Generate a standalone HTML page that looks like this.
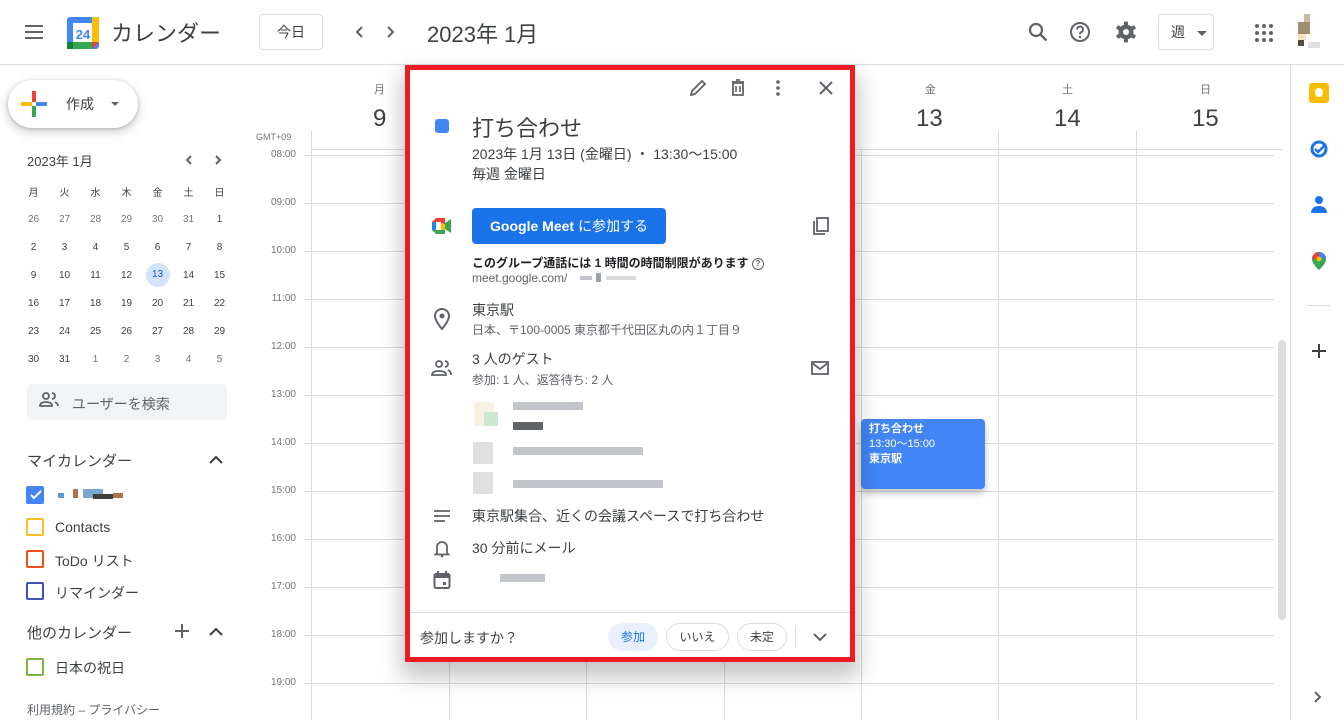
<!DOCTYPE html>
<html style="width:1344px;height:720px;overflow:hidden"><head><meta charset="utf-8"><style>
*{box-sizing:border-box;margin:0;padding:0}
body{width:1344px;height:720px;overflow:hidden;background:#fff;font-family:"Liberation Sans","Noto Sans CJK JP",sans-serif;color:#3c4043;position:relative}
.a{position:absolute}
.t{white-space:nowrap}
.hl{position:absolute;left:304px;width:970px;height:1px;background:#dadce0}
.vl{position:absolute;top:130px;width:1px;height:590px;background:#dadce0}
.tl{position:absolute;left:256px;width:40px;text-align:right;font-size:10px;color:#70757a}
.mc td{width:31px;height:28px;text-align:center;font-size:10px;color:#3c4043;padding:0}
.cb{position:absolute;left:26px;width:18px;height:18px;border:2px solid;border-radius:2px}
.cl{position:absolute;left:55px;font-size:14px;color:#3c4043}
.px{position:absolute;background:#9aa0a6}
</style></head><body>
<div class="a" style="left:0;top:64px;width:1344px;height:1px;background:#dadce0"></div>
<svg class="a" style="left:24px;top:22px" width="20" height="20" viewBox="0 0 20 20"><path d="M1 4h18M1 10h18M1 16h18" stroke="#5f6368" stroke-width="2"/></svg>
<svg class="a" style="left:66px;top:16px" width="34" height="34" viewBox="0 0 34 34"><rect x="1" y="1" width="32" height="32" rx="3" fill="#4285f4"/><rect x="7" y="7" width="20" height="20" fill="#fff"/><rect x="1" y="26" width="26" height="7" fill="#34a853"/><rect x="26" y="1" width="7" height="26" fill="#fbbc04"/><path d="M26 26h7l-7 7z" fill="#ea4335"/><rect x="1" y="26" width="6" height="7" fill="#188038"/><text x="17" y="23" font-size="13" font-family="Liberation Sans" fill="#4285f4" text-anchor="middle" font-weight="bold">24</text></svg>
<div class="a t" style="left:111px;top:16px;font-size:22px;color:#3c4043">カレンダー</div>
<div class="a" style="left:259px;top:14px;width:64px;height:36px;border:1px solid #dadce0;border-radius:4px;font-size:14px;text-align:center;line-height:34px">今日</div>
<svg class="a" style="left:352px;top:24px" width="50" height="16" viewBox="0 0 50 16"><path d="M10 3l-5 5 5 5M36 3l5 5-5 5" stroke="#5f6368" stroke-width="2" fill="none"/></svg>
<div class="a t" style="left:427px;top:17px;font-size:22px;color:#3c4043">2023年 1月</div>
<svg class="a" style="left:1026px;top:20px" width="24" height="24" viewBox="0 0 24 24"><circle cx="10" cy="10" r="6" stroke="#5f6368" stroke-width="2.2" fill="none"/><path d="M14.5 14.5l6 6" stroke="#5f6368" stroke-width="2.4"/></svg>
<svg class="a" style="left:1068px;top:20px" width="24" height="24" viewBox="0 0 24 24"><circle cx="12" cy="12" r="9" stroke="#5f6368" stroke-width="2" fill="none"/><path d="M9 9.5a3 3 0 1 1 4 2.8c-.8.4-1 1-1 2" stroke="#5f6368" stroke-width="2" fill="none"/><circle cx="12" cy="17" r="1.2" fill="#5f6368"/></svg>
<svg class="a" style="left:1114px;top:20px" width="24" height="24" viewBox="0 0 24 24"><g fill="#5f6368"><rect x="10" y="1.5" width="4" height="21" rx="1"/><rect x="10" y="1.5" width="4" height="21" rx="1" transform="rotate(60 12 12)"/><rect x="10" y="1.5" width="4" height="21" rx="1" transform="rotate(120 12 12)"/><circle cx="12" cy="12" r="7.5"/></g><circle cx="12" cy="12" r="3" fill="#fff"/></svg>
<div class="a" style="left:1158px;top:14px;width:56px;height:36px;border:1px solid #dadce0;border-radius:4px;font-size:14px;line-height:34px;padding-left:12px">週<span style="position:absolute;left:38px;top:16px;border:5px solid transparent;border-top-color:#5f6368;border-bottom:0"></span></div>
<svg class="a" style="left:1255px;top:24px" width="18" height="18" viewBox="0 0 18 18" fill="#5f6368"><circle cx="2" cy="2" r="2"/><circle cx="9" cy="2" r="2"/><circle cx="16" cy="2" r="2"/><circle cx="2" cy="9" r="2"/><circle cx="9" cy="9" r="2"/><circle cx="16" cy="9" r="2"/><circle cx="2" cy="16" r="2"/><circle cx="9" cy="16" r="2"/><circle cx="16" cy="16" r="2"/></svg>
<div class="a" style="left:1304px;top:14px;width:6px;height:8px;background:#c9bba8"></div><div class="a" style="left:1298px;top:22px;width:12px;height:12px;background:#a08c70"></div><div class="a" style="left:1298px;top:34px;width:8px;height:6px;background:#f2e0c0"></div><div class="a" style="left:1298px;top:40px;width:6px;height:6px;background:#5a4a40"></div><div class="a" style="left:1308px;top:42px;width:12px;height:6px;background:#e0e0e0"></div>

<div class="a" style="left:8px;top:80px;width:130px;height:48px;border-radius:24px;box-shadow:0 1px 3px rgba(60,64,67,.3),0 4px 8px 3px rgba(60,64,67,.15);background:#fff"></div>
<svg class="a" style="left:21px;top:91px" width="26" height="26" viewBox="0 0 26 26"><rect x="11" y="0" width="4" height="11" fill="#ea4335"/><rect x="15" y="11" width="11" height="4" fill="#4285f4"/><rect x="11" y="15" width="4" height="11" fill="#34a853"/><rect x="0" y="11" width="11" height="4" fill="#fbbc04"/></svg>
<div class="a t" style="left:66px;top:94px;font-size:14px">作成</div>
<div class="a" style="left:111px;top:102px;border:4px solid transparent;border-top-color:#5f6368;border-bottom:0"></div>
<div class="a t" style="left:27px;top:151px;font-size:13px;color:#3c4043">2023年 1月</div>
<svg class="a" style="left:182px;top:153px" width="44" height="14" viewBox="0 0 44 14"><path d="M9 3l-4 4 4 4M34 3l4 4-4 4" stroke="#5f6368" stroke-width="2" fill="none"/></svg>
<table class="a mc" style="left:18px;top:177px;border-collapse:collapse">
<tr><td>月</td><td>火</td><td>水</td><td>木</td><td>金</td><td>土</td><td>日</td></tr>
<tr><td style="color:#70757a">26</td><td style="color:#70757a">27</td><td style="color:#70757a">28</td><td style="color:#70757a">29</td><td style="color:#70757a">30</td><td style="color:#70757a">31</td><td>1</td></tr>
<tr><td>2</td><td>3</td><td>4</td><td>5</td><td>6</td><td>7</td><td>8</td></tr>
<tr><td>9</td><td>10</td><td>11</td><td>12</td><td><span style="display:inline-block;width:24px;height:24px;border-radius:12px;background:#d2e3fc;color:#185abc;line-height:24px">13</span></td><td>14</td><td>15</td></tr>
<tr><td>16</td><td>17</td><td>18</td><td>19</td><td>20</td><td>21</td><td>22</td></tr>
<tr><td>23</td><td>24</td><td>25</td><td>26</td><td>27</td><td>28</td><td>29</td></tr>
<tr><td>30</td><td>31</td><td style="color:#70757a">1</td><td style="color:#70757a">2</td><td style="color:#70757a">3</td><td style="color:#70757a">4</td><td style="color:#70757a">5</td></tr>
</table>
<div class="a" style="left:27px;top:384px;width:200px;height:36px;background:#f1f3f4;border-radius:4px"></div>
<svg class="a" style="left:39px;top:392px" width="20" height="16" viewBox="0 0 20 16"><circle cx="7" cy="4" r="3" stroke="#5f6368" stroke-width="1.8" fill="none"/><path d="M1 14c0-3 3-4 6-4s6 1 6 4zM13 1a3 3 0 0 1 0 6M16 10c2 1 3 2 3 4" stroke="#5f6368" stroke-width="1.8" fill="none"/></svg>
<div class="a t" style="left:72px;top:394px;font-size:14px;color:#5f6368">ユーザーを検索</div>
<div class="a t" style="left:27px;top:450px;font-size:15px;color:#3c4043">マイカレンダー</div>
<svg class="a" style="left:208px;top:454px" width="16" height="12" viewBox="0 0 16 12"><path d="M2 9l6-6 6 6" stroke="#3c4043" stroke-width="2" fill="none"/></svg>
<div class="cb" style="top:486px;background:#4285f4;border-color:#4285f4"></div>
<svg class="a" style="left:29px;top:489px" width="14" height="12" viewBox="0 0 14 12"><path d="M2 6l3 3 7-7" stroke="#fff" stroke-width="2" fill="none"/></svg>
<div class="a" style="left:58px;top:493px;width:6px;height:5px;background:#5b9bd5"></div><div class="a" style="left:73px;top:489px;width:5px;height:9px;background:#b0704a"></div><div class="a" style="left:83px;top:489px;width:20px;height:9px;background:#7aa6cf"></div><div class="a" style="left:93px;top:494px;width:20px;height:5px;background:#3c4043"></div><div class="a" style="left:113px;top:493px;width:10px;height:5px;background:#b0704a"></div>
<div class="cb" style="top:518px;border-color:#f6bf26"></div><div class="cl t" style="top:519px">Contacts</div>
<div class="cb" style="top:550px;border-color:#f4511e"></div><div class="cl t" style="top:551px">ToDo リスト</div>
<div class="cb" style="top:582px;border-color:#3f51b5"></div><div class="cl t" style="top:583px">リマインダー</div>
<div class="a t" style="left:27px;top:622px;font-size:15px">他のカレンダー</div>
<svg class="a" style="left:174px;top:623px" width="16" height="16" viewBox="0 0 16 16"><path d="M8 1v14M1 8h14" stroke="#5f6368" stroke-width="2"/></svg>
<svg class="a" style="left:208px;top:626px" width="16" height="12" viewBox="0 0 16 12"><path d="M2 9l6-6 6 6" stroke="#3c4043" stroke-width="2" fill="none"/></svg>
<div class="cb" style="top:658px;border-color:#7cb342"></div><div class="cl t" style="top:658px">日本の祝日</div>
<div class="a t" style="left:27px;top:701px;font-size:12px;color:#5f6368">利用規約 – プライバシー</div>

<div class="a t" style="left:256px;top:132px;font-size:9px;color:#70757a">GMT+09</div>
<div class="vl" style="left:311px;top:130px"></div>
<div class="vl" style="left:449px;top:150px;height:570px"></div><div class="vl" style="left:586px;top:150px;height:570px"></div><div class="vl" style="left:724px;top:150px;height:570px"></div><div class="vl" style="left:861px;top:150px;height:570px"></div><div class="vl" style="left:998px"></div><div class="vl" style="left:1136px"></div>
<div class="hl" style="top:149px;left:312px"></div>
<div class="hl" style="top:155px"></div><div class="hl" style="top:203px"></div><div class="hl" style="top:251px"></div><div class="hl" style="top:299px"></div><div class="hl" style="top:347px"></div><div class="hl" style="top:395px"></div><div class="hl" style="top:443px"></div><div class="hl" style="top:491px"></div><div class="hl" style="top:539px"></div><div class="hl" style="top:587px"></div><div class="hl" style="top:635px"></div><div class="hl" style="top:683px"></div>
<div class="tl" style="top:149px">08:00</div><div class="tl" style="top:197px">09:00</div><div class="tl" style="top:245px">10:00</div><div class="tl" style="top:293px">11:00</div><div class="tl" style="top:341px">12:00</div><div class="tl" style="top:389px">13:00</div><div class="tl" style="top:437px">14:00</div><div class="tl" style="top:485px">15:00</div><div class="tl" style="top:533px">16:00</div><div class="tl" style="top:581px">17:00</div><div class="tl" style="top:629px">18:00</div><div class="tl" style="top:677px">19:00</div>
<div class="a t" style="left:374px;top:81px;font-size:11px;color:#70757a">月</div>
<div class="a t" style="left:373px;top:105px;font-size:24px;color:#3c4043">9</div>
<div class="a t" style="left:925px;top:81px;font-size:11px;color:#70757a">金</div>
<div class="a t" style="left:916px;top:105px;font-size:24px">13</div>
<div class="a t" style="left:1062px;top:81px;font-size:11px;color:#70757a">土</div>
<div class="a t" style="left:1054px;top:105px;font-size:24px">14</div>
<div class="a t" style="left:1200px;top:81px;font-size:11px;color:#70757a">日</div>
<div class="a t" style="left:1192px;top:105px;font-size:24px">15</div>
<div class="a" style="left:861px;top:419px;width:124px;height:70px;background:#4285f4;border-radius:4px;box-shadow:0 4px 8px rgba(0,0,0,.25);color:#fff;font-size:11px;font-weight:bold;padding:3px 8px;line-height:15px">打ち合わせ<br><span style="font-weight:normal">13:30〜15:00</span><br>東京駅</div>
<div class="a" style="left:1278px;top:340px;width:8px;height:280px;background:#dadce0;border-radius:4px"></div>
<div class="a" style="left:1290px;top:65px;width:1px;height:655px;background:#dadce0"></div>
<div class="a" style="left:1309px;top:83px;width:20px;height:20px;background:#fbbc04;border-radius:3px"></div><div class="a" style="left:1315px;top:88px;width:8px;height:9px;background:#fff;border-radius:4px"></div>
<svg class="a" style="left:1309px;top:139px" width="20" height="20" viewBox="0 0 20 20"><circle cx="10" cy="10" r="7" stroke="#1a73e8" stroke-width="3" fill="none"/><path d="M6 10l3 3 7-7" stroke="#1a73e8" stroke-width="2.5" fill="none"/></svg>
<svg class="a" style="left:1310px;top:194px" width="18" height="20" viewBox="0 0 18 20"><circle cx="9" cy="6" r="4" fill="#1a73e8"/><path d="M1 19c0-5 4-7 8-7s8 2 8 7z" fill="#1a73e8"/></svg>
<svg class="a" style="left:1311px;top:251px" width="16" height="20" viewBox="0 0 16 20"><path d="M8 1a7 7 0 0 1 7 7c0 5-7 11-7 11S1 13 1 8a7 7 0 0 1 7-7z" fill="#34a853"/><path d="M8 1a7 7 0 0 1 7 7H8z" fill="#4285f4"/><path d="M1 8a7 7 0 0 1 7-7v7z" fill="#ea4335"/><circle cx="8" cy="8" r="2.5" fill="#fbbc04"/></svg>
<div class="a" style="left:1307px;top:305px;width:24px;height:1px;background:#dadce0"></div>
<svg class="a" style="left:1311px;top:343px" width="16" height="16" viewBox="0 0 16 16"><path d="M8 1v14M1 8h14" stroke="#3c4043" stroke-width="2"/></svg>
<svg class="a" style="left:1313px;top:690px" width="10" height="14" viewBox="0 0 10 14"><path d="M2 2l5 5-5 5" stroke="#5f6368" stroke-width="2" fill="none"/></svg>

<div class="a" style="left:405px;top:65px;width:450px;height:597px;border:5px solid #ed1c24;background:#fff;box-shadow:0 12px 20px 4px rgba(0,0,0,.22)"></div>
<svg class="a" style="left:688px;top:78px" width="20" height="20" viewBox="0 0 20 20"><path d="M3 17l1-4L14 3l3 3L7 16z" stroke="#5f6368" stroke-width="1.8" fill="none"/></svg>
<svg class="a" style="left:728px;top:78px" width="20" height="20" viewBox="0 0 20 20"><path d="M4 4h12M8 2h4M5 5h10v12H5z" stroke="#5f6368" stroke-width="1.8" fill="none"/><path d="M8 8v6M12 8v6" stroke="#5f6368" stroke-width="1.6"/></svg>
<svg class="a" style="left:774px;top:79px" width="8" height="18" viewBox="0 0 8 18" fill="#5f6368"><circle cx="4" cy="3" r="1.8"/><circle cx="4" cy="9" r="1.8"/><circle cx="4" cy="15" r="1.8"/></svg>
<svg class="a" style="left:817px;top:79px" width="18" height="18" viewBox="0 0 18 18"><path d="M3 3l12 12M15 3L3 15" stroke="#5f6368" stroke-width="2"/></svg>
<div class="a" style="left:435px;top:119px;width:14px;height:14px;background:#4285f4;border-radius:3px"></div>
<div class="a t" style="left:472px;top:111px;font-size:22px;color:#3c4043">打ち合わせ</div>
<div class="a t" style="left:472px;top:144px;font-size:14px">2023年 1月 13日 (金曜日) ・ 13:30〜15:00</div>
<div class="a t" style="left:472px;top:164px;font-size:14px">毎週 金曜日</div>
<svg class="a" style="left:432px;top:218px" width="20" height="16" viewBox="0 0 20 16"><path d="M0 4l4-4h9v6z" fill="#ea4335"/><rect x="0" y="4" width="4" height="8" fill="#1e88e5"/><path d="M0 12h13v4H4z" fill="#34a853"/><rect x="9" y="6" width="4" height="6" fill="#fbbc04"/><path d="M13 5l6-4v14l-6-4z" fill="#34a853"/><rect x="4" y="4" width="5" height="8" fill="#fff"/></svg>
<div class="a" style="left:472px;top:208px;width:194px;height:36px;background:#1a73e8;border-radius:4px;color:#fff;font-size:14px;font-weight:bold;text-align:center;line-height:36px">Google Meet <span style="font-weight:normal">に参加する</span></div>
<svg class="a" style="left:810px;top:216px" width="20" height="20" viewBox="0 0 20 20"><path d="M4 5v13h11" stroke="#5f6368" stroke-width="1.8" fill="none"/><rect x="7" y="2" width="11" height="13" stroke="#5f6368" stroke-width="1.8" fill="none"/></svg>
<div class="a t" style="left:472px;top:254px;font-size:12px;font-weight:bold;color:#202124">このグループ通話には 1 時間の時間制限があります <span style="display:inline-block;width:12px;height:12px;border:1.5px solid #5f6368;border-radius:6px;font-size:8px;line-height:9px;text-align:center;color:#5f6368;vertical-align:1px">?</span></div>
<div class="a t" style="left:472px;top:271px;font-size:12px;color:#5f6368">meet.google.com/</div>
<div class="px" style="left:580px;top:276px;width:12px;height:4px;opacity:.6"></div><div class="px" style="left:596px;top:273px;width:5px;height:9px"></div><div class="px" style="left:606px;top:276px;width:30px;height:4px;opacity:.4"></div>
<svg class="a" style="left:432px;top:307px" width="20" height="24" viewBox="0 0 20 24"><path d="M10 2a7 7 0 0 1 7 7c0 5-7 13-7 13S3 14 3 9a7 7 0 0 1 7-7z" stroke="#5f6368" stroke-width="2" fill="none"/><circle cx="10" cy="9" r="2.5" fill="#5f6368"/></svg>
<div class="a t" style="left:472px;top:300px;font-size:14px">東京駅</div>
<div class="a t" style="left:472px;top:321px;font-size:12px;color:#5f6368">日本、〒100-0005 東京都千代田区丸の内１丁目９</div>
<svg class="a" style="left:431px;top:360px" width="22" height="16" viewBox="0 0 22 16"><circle cx="8" cy="4" r="3" stroke="#5f6368" stroke-width="1.8" fill="none"/><path d="M1 15c0-3 3-4 7-4s7 1 7 4zM14 1a3 3 0 0 1 0 6M17 10c2 1 3 2 3 5" stroke="#5f6368" stroke-width="1.8" fill="none"/></svg>
<div class="a t" style="left:472px;top:349px;font-size:14px">3 人のゲスト</div>
<div class="a t" style="left:472px;top:371px;font-size:12px;color:#5f6368">参加: 1 人、返答待ち: 2 人</div>
<svg class="a" style="left:810px;top:360px" width="20" height="16" viewBox="0 0 20 16"><rect x="2" y="2" width="16" height="12" stroke="#5f6368" stroke-width="1.8" fill="none"/><path d="M2 3l8 6 8-6" stroke="#5f6368" stroke-width="1.8" fill="none"/></svg>
<div class="a" style="left:474px;top:402px;width:20px;height:24px;background:#f5ecd8;opacity:.7"></div><div class="a" style="left:484px;top:412px;width:14px;height:14px;background:#cce8d0"></div>
<div class="px" style="left:513px;top:402px;width:70px;height:8px;opacity:.6"></div><div class="px" style="left:513px;top:422px;width:30px;height:8px;background:#5f6368"></div>
<div class="a" style="left:473px;top:442px;width:20px;height:22px;background:#e0e0e0"></div><div class="px" style="left:513px;top:447px;width:130px;height:8px;opacity:.6"></div>
<div class="a" style="left:473px;top:472px;width:20px;height:22px;background:#e0e0e0"></div><div class="px" style="left:513px;top:480px;width:150px;height:8px;opacity:.6"></div>
<svg class="a" style="left:433px;top:509px" width="18" height="14" viewBox="0 0 18 14"><path d="M1 2h16M1 7h16M1 12h11" stroke="#5f6368" stroke-width="1.8"/></svg>
<div class="a t" style="left:472px;top:506px;font-size:14px">東京駅集合、近くの会議スペースで打ち合わせ</div>
<svg class="a" style="left:434px;top:538px" width="16" height="20" viewBox="0 0 16 20"><path d="M3 15V9a5 5 0 0 1 10 0v6l1.5 1.5h-13z" stroke="#5f6368" stroke-width="1.8" fill="none"/><circle cx="8" cy="18" r="1.3" fill="#5f6368"/></svg>
<div class="a t" style="left:472px;top:538px;font-size:14px">30 分前にメール</div>
<svg class="a" style="left:433px;top:570px" width="18" height="20" viewBox="0 0 18 20"><rect x="1.5" y="4" width="15" height="14" rx="1.5" stroke="#5f6368" stroke-width="2" fill="none"/><path d="M1.5 4h15v4h-15z" fill="#5f6368"/><path d="M5 1v4M13 1v4" stroke="#5f6368" stroke-width="2"/><rect x="10" y="12" width="3" height="3" fill="#5f6368"/></svg>
<div class="px" style="left:500px;top:574px;width:45px;height:8px;opacity:.6"></div>
<div class="a" style="left:410px;top:612px;width:440px;height:1px;background:#dadce0"></div>
<div class="a t" style="left:420px;top:628px;font-size:14px">参加しますか？</div>
<div class="a" style="left:608px;top:623px;width:50px;height:28px;border-radius:14px;background:#e8f0fe;color:#1a73e8;font-size:12px;text-align:center;line-height:28px">参加</div>
<div class="a" style="left:666px;top:623px;width:63px;height:28px;border-radius:14px;border:1px solid #dadce0;font-size:12px;text-align:center;line-height:26px">いいえ</div>
<div class="a" style="left:737px;top:623px;width:50px;height:28px;border-radius:14px;border:1px solid #dadce0;font-size:12px;text-align:center;line-height:26px">未定</div>
<div class="a" style="left:795px;top:626px;width:1px;height:22px;background:#dadce0"></div>
<svg class="a" style="left:812px;top:632px" width="16" height="10" viewBox="0 0 16 10"><path d="M2 2l6 6 6-6" stroke="#5f6368" stroke-width="2" fill="none"/></svg>
</body></html>
